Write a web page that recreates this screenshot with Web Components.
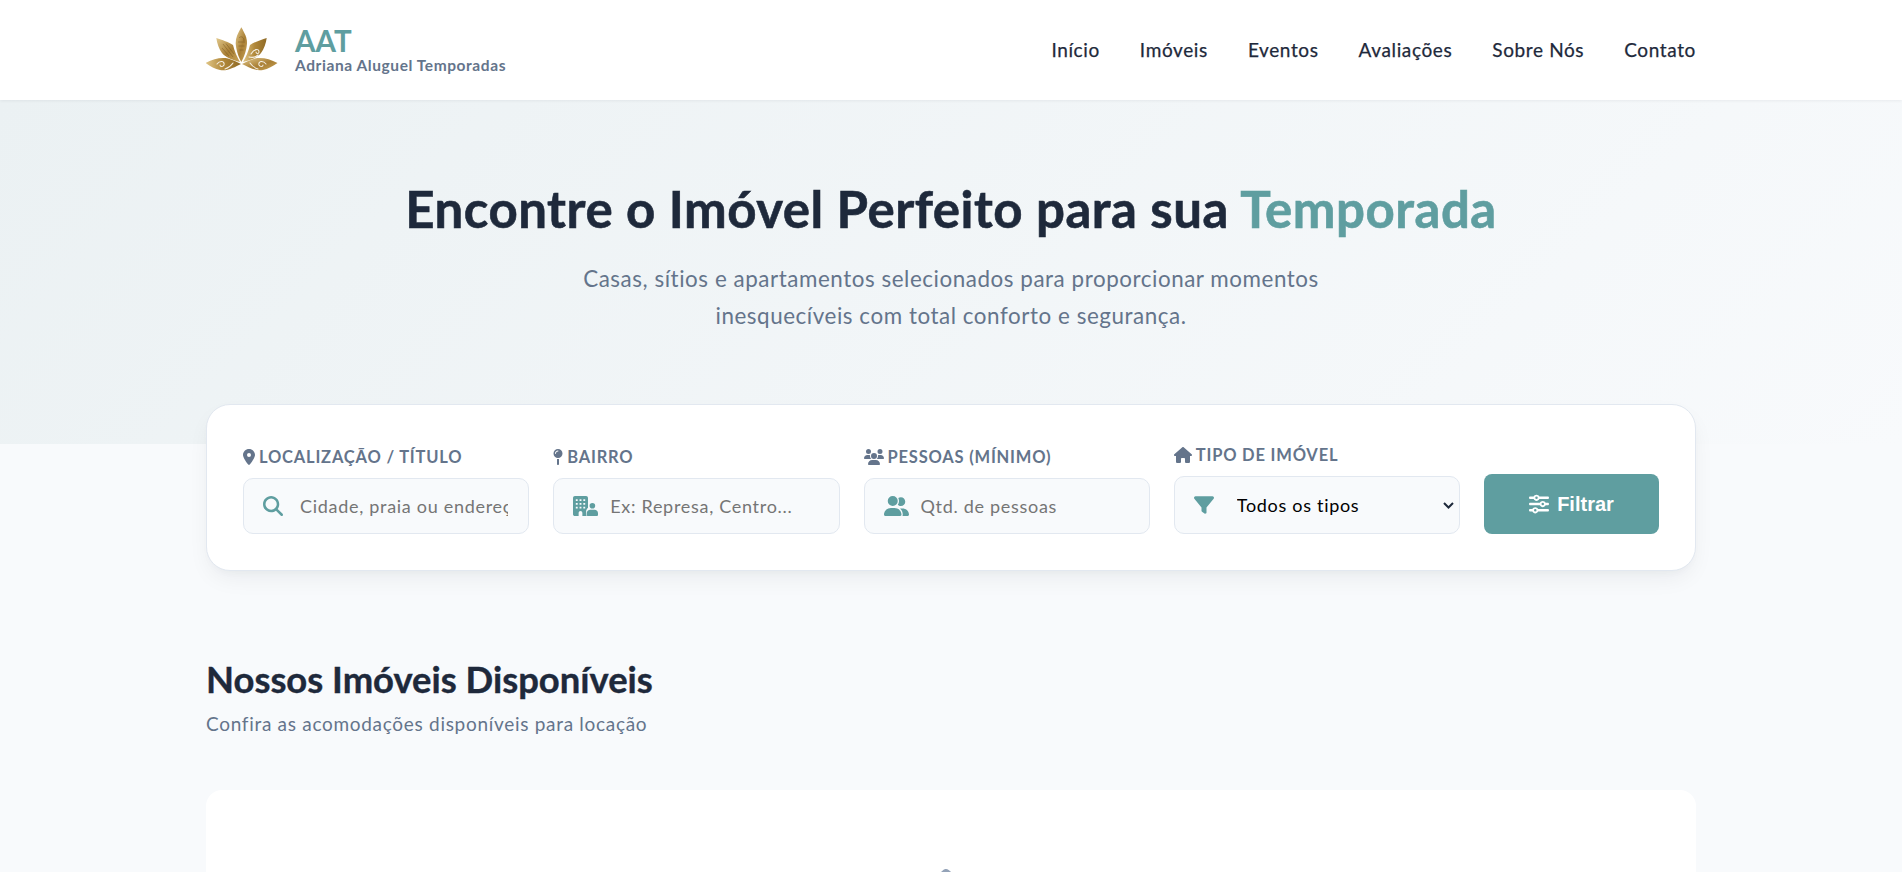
<!DOCTYPE html>
<html lang="pt-BR">
<head>
<meta charset="utf-8">
<title>AAT - Adriana Aluguel Temporadas</title>
<style>
  html, body { margin: 0; height: 872px; overflow: hidden; background: #f8fafc; }
  body { font-family: "Lato", "Noto Sans", sans-serif; color: #1e293b; }
  .page-main { display: block; width: 1490px; margin: 0 auto; }
</style>
</head>
<body>
<site-header></site-header>
<hero-section>
  Encontre o Imóvel Perfeito para sua <em slot="accent">Temporada</em>
  <span slot="sub">Casas, sítios e apartamentos selecionados para proporcionar momentos<br>inesquecíveis com total conforto e segurança.</span>
</hero-section>
<div class="page-main">
  <search-panel></search-panel>
  <section-heading title="Nossos Imóveis Disponíveis" sub="Confira as acomodações disponíveis para locação"></section-heading>
  <empty-state></empty-state>
</div>

<script>
const ICONS = {
  pin: ["0 0 384 512", "M215.7 499.2C267 435 384 279.4 384 192C384 86 298 0 192 0S0 86 0 192c0 87.4 117 243 168.3 307.2c12.3 15.3 35.1 15.3 47.4 0zM192 128a64 64 0 1 1 0 128 64 64 0 1 1 0-128z"],
  mapPin: ["0 0 320 512", "M16 144a144 144 0 1 1 288 0A144 144 0 1 1 16 144zM160 80c8.8 0 16-7.2 16-16s-7.2-16-16-16c-53 0-96 43-96 96c0 8.8 7.2 16 16 16s16-7.2 16-16c0-35.3 28.7-64 64-64zM128 480V317.1c10.4 1.9 21.1 2.9 32 2.9s21.6-1 32-2.9V480c0 17.7-14.3 32-32 32s-32-14.3-32-32z"],
  users: ["0 0 640 512", "M144 0a80 80 0 1 1 0 160A80 80 0 1 1 144 0zM512 0a80 80 0 1 1 0 160A80 80 0 1 1 512 0zM0 298.7C0 239.8 47.8 192 106.7 192h42.7c15.9 0 31 3.5 44.6 9.7c-1.3 7.2-1.9 14.7-1.9 22.3c0 38.2 16.8 72.5 43.3 96c-.2 0-.4 0-.7 0H21.3C9.6 320 0 310.4 0 298.7zM405.3 320c-.2 0-.4 0-.7 0c26.6-23.5 43.3-57.8 43.3-96c0-7.6-.7-15-1.9-22.3c13.6-6.3 28.7-9.7 44.6-9.7h42.7C592.2 192 640 239.8 640 298.7c0 11.8-9.6 21.3-21.3 21.3H405.3zM224 224a96 96 0 1 1 192 0 96 96 0 1 1 -192 0zM128 485.3C128 411.7 187.7 352 261.3 352H378.7C452.3 352 512 411.7 512 485.3c0 14.7-11.9 26.7-26.7 26.7H154.7c-14.7 0-26.7-11.9-26.7-26.7z"],
  house: ["0 0 576 512", "M575.8 255.5c0 18-15 32.1-32 32.1h-32l.7 160.2c0 2.7-.2 5.4-.5 8.1V472c0 22.1-17.9 40-40 40H456c-1.1 0-2.2 0-3.3-.1c-1.4 .1-2.8 .1-4.2 .1H416 392c-22.1 0-40-17.9-40-40V448 384c0-17.7-14.3-32-32-32H256c-17.7 0-32 14.3-32 32v64 24c0 22.1-17.9 40-40 40H160 128.1c-1.5 0-3-.1-4.5-.2c-1.2 .1-2.4 .2-3.6 .2H104c-22.1 0-40-17.9-40-40V360c0-.9 0-1.9 .1-2.8V287.6H32c-18 0-32-14-32-32.1c0-9 3-17 10-24L266.4 8c7-7 15-8 22-8s15 2 21 7L564.8 231.5c8 7 12 15 11 24z"],
  search: ["0 0 512 512", "M416 208c0 45.9-14.9 88.3-40 122.7L502.6 457.4c12.5 12.5 12.5 32.8 0 45.3s-32.8 12.5-45.3 0L330.7 376c-34.4 25.2-76.8 40-122.7 40C93.1 416 0 322.9 0 208S93.1 0 208 0S416 93.1 416 208zM208 352a144 144 0 1 0 0-288 144 144 0 1 0 0 288z"],
  buildingUser: ["0 0 640 512", "M48 0H336c26.5 0 48 21.5 48 48V300c-30 24-48 60-48 100v64c0 18 6 34 16 48H240V432c0-26.5-21.5-48-48-48s-48 21.5-48 48v80H48c-26.5 0-48-21.5-48-48V48C0 21.500 21.500 0 48 0zM72 80v48h48V80H72zM168 80v48h48V80H168zM264 80v48h48V80H264zM72 176v48h48V176H72zM168 176v48h48V176H168zM264 176v48h48V176H264zM72 272v48h48V272H72zM168 272v48h48V272H168zM264 272v48h48V272H264zM496 176a72 72 0 1 1 0 144 72 72 0 1 1 0-144zM440 352H552c48 0 88 40 88 88v40c0 18-14 32-32 32H384c-18 0-32-14-32-32v-40c0-48 40-88 88-88z"],
  userGroup: ["0 0 640 512", "M96 128a128 128 0 1 1 256 0A128 128 0 1 1 96 128zM0 482.300C0 383.800 79.800 304 178.300 304h91.400C368.200 304 448 383.800 448 482.300c0 16.400-13.300 29.700-29.700 29.700H29.700C13.300 512 0 498.700 0 482.300zM609.300 512H471.400c5.400-9.400 8.600-20.300 8.600-32v-8c0-60.700-27.100-115.200-69.800-151.800c2.400-.1 4.700-.2 7.100-.2h61.400C567.800 320 640 392.200 640 481.300c0 17-13.800 30.700-30.700 30.700zM432 256c-31 0-59-12.600-79.300-32.900C372.400 196.500 384 163.600 384 128c0-26.800-6.600-52.100-18.300-74.300C384.300 40.100 407.200 32 432 32c61.900 0 112 50.100 112 112s-50.100 112-112 112z"],
  filter: ["0 0 512 512", "M3.900 54.900C10.500 40.900 24.500 32 40 32H472c15.500 0 29.500 8.900 36.100 22.900s4.600 30.500-5.200 42.500L320 320.900V448c0 12.100-6.800 23.200-17.700 28.600s-23.800 4.300-33.500-3l-64-48c-8.100-6-12.800-15.500-12.800-25.600V320.900L9 97.300C-.7 85.400-2.800 68.800 3.900 54.900z"],
  sliders: ["0 0 512 512", "M0 416c0 17.700 14.300 32 32 32l54.700 0c12.300 28.300 40.500 48 73.300 48s61-19.700 73.300-48L480 448c17.700 0 32-14.300 32-32s-14.300-32-32-32l-246.700 0c-12.300-28.300-40.500-48-73.300-48s-61 19.700-73.300 48L32 384c-17.700 0-32 14.300-32 32zm128 0a32 32 0 1 1 64 0 32 32 0 1 1 -64 0zM320 256a32 32 0 1 1 64 0 32 32 0 1 1 -64 0zm32-80c-32.800 0-61 19.700-73.300 48L32 224c-17.700 0-32 14.300-32 32s14.300 32 32 32l246.700 0c12.300 28.300 40.500 48 73.300 48s61-19.700 73.300-48l54.700 0c17.700 0 32-14.300 32-32s-14.300-32-32-32l-54.700 0c-12.300-28.300-40.500-48-73.300-48zM192 128a32 32 0 1 1 0-64 32 32 0 1 1 0 64zm73.300-64C253 35.700 224.800 16 192 16s-61 19.700-73.300 48L32 64C14.300 64 0 78.300 0 96s14.300 32 32 32l86.700 0c12.300 28.300 40.500 48 73.300 48s61-19.700 73.300-48L480 128c17.700 0 32-14.300 32-32s-14.300-32-32-32L265.300 64z"]
};

function icon(name, h) {
  const [box, d] = ICONS[name];
  const [, , w, ht] = box.split(" ").map(Number);
  return `<svg viewBox="${box}" width="${(h * w / ht).toFixed(2)}" height="${h}" fill="currentColor" aria-hidden="true"><path fill-rule="evenodd" d="${d}"/></svg>`;
}

class LotusLogo extends HTMLElement {
  constructor() {
    super();
    this.attachShadow({ mode: "open" });
    this.shadowRoot.innerHTML = `
      <style>:host { display: block; width: 72px; height: 46px; } svg { display: block; }</style>
      <svg viewBox="0 0 72 46" width="72" height="46">
        <defs>
          <linearGradient id="g" x1="0" y1="0" x2="1" y2="1">
            <stop offset="0" stop-color="#e2c98c"/><stop offset=".55" stop-color="#a97f35"/><stop offset="1" stop-color="#c9a458"/>
          </linearGradient>
          <linearGradient id="h" x1="0" y1="0" x2="1" y2="0">
            <stop offset="0" stop-color="#e0c687"/><stop offset=".5" stop-color="#b08739"/><stop offset="1" stop-color="#8f6a26"/>
          </linearGradient>
        </defs>
        <path fill="url(#g)" d="M35.300 .3 C32 6 29.500 11 29.700 16 C30 23 32.500 30 35.300 35 C38 30 40.700 23 41 16 C41.200 11 38.500 6 35.300 .3Z"/>
        <path fill="url(#g)" d="M10.300 11 C16 13 23 15 27 18 C28.500 24 31 30 34 35 C26 33 19 30 16 26 C13 22 11 16 10.300 11Z"/>
        <path fill="url(#h)" d="M60.700 11 C55 13 48 15 44 18 C42.500 24 40 30 37 35 C45 33 52 30 55 26 C58 22 60 16 60.700 11Z"/>
        <path fill="url(#h)" d="M-.3 36 C7 32 15 30 22 31.500 C27 33 31 35 35 37 C29 40 21 44.500 14 43 C9 42 4 39 -.3 36Z"/>
        <path fill="url(#g)" d="M71.500 36 C64 32 56 30 49 31.500 C44 33 40 35 36 37 C42 40 50 44.500 57 43 C62 42 67 39 71.500 36Z"/>
        <g fill="none" stroke="#fff" stroke-opacity=".85" stroke-width="1.100" stroke-linecap="round">
          <path d="M11 37 C14 33 19 34 18 38 C17 40 14 40 14 38 M19 42 C22 41 25 39 27 36"/>
          <path d="M60 37 C57 33 52 34 53 38 C54 40 57 40 57 38 M52 42 C49 41 46 39 44 36"/>
          <path d="M45 27 C48 22 53 21 53 25 C53 27 50 27 50 25 M43 30 C47 31 50 30 52 28"/>
        </g>
        <g fill="none" stroke="#6e4f1c" stroke-opacity=".55" stroke-width=".8">
          <path d="M33 11 C35 8.500 38 10 38 14 M32 15 H39 M32.500 19 H38.500 M33.500 23 H37.500"/>
          <path d="M17 17 L27 30 M20 16.500 L28 27 M16 21 L23 29"/>
        </g>
      </svg>`;
  }
}

class SiteHeader extends HTMLElement {
  constructor() {
    super();
    this.attachShadow({ mode: "open" });
    const links = ["Início", "Imóveis", "Eventos", "Avaliações", "Sobre Nós", "Contato"];
    this.shadowRoot.innerHTML = `
      <style>
        :host { display: block; position: relative; z-index: 2; background: #fff; box-shadow: 0 1px 3px rgba(15, 23, 42, .06); }
        .bar { width: 1490px; height: 100px; margin: 0 auto; display: flex; align-items: center; justify-content: space-between; }
        .brand { display: flex; align-items: center; gap: 17px; }
        .name { font-size: 29.500px; font-weight: 700; color: #5f9ea0; line-height: 30px; }
        .tag { font-size: 15.500px; font-weight: 700; letter-spacing: .58px; color: #64748b; line-height: 18px; }
        nav { display: flex; gap: 40px; margin-top: -2px; }
        a { color: #1e293b; font-size: 19px; letter-spacing: .62px; -webkit-text-stroke: .25px #1e293b; text-decoration: none; }
      </style>
      <div class="bar">
        <div class="brand">
          <lotus-logo></lotus-logo>
          <div><div class="name">AAT</div><div class="tag">Adriana Aluguel Temporadas</div></div>
        </div>
        <nav>${links.map((l) => `<a href="#">${l}</a>`).join("")}</nav>
      </div>`;
  }
}

class HeroSection extends HTMLElement {
  constructor() {
    super();
    this.attachShadow({ mode: "open" });
    this.shadowRoot.innerHTML = `
      <style>
        :host { display: block; height: 344px; box-sizing: border-box; padding-top: 80px; text-align: center; background: linear-gradient(135deg, #ebf1f3 0%, #f8fafc 100%); }
        h1 { margin: 0 0 22px; font-size: 51px; letter-spacing: .5px; line-height: 58px; font-weight: 700; -webkit-text-stroke: .6px; color: #1e293b; }
        ::slotted(em) { font-style: normal; color: #5f9ea0; }
        p { margin: 0; font-size: 22.400px; letter-spacing: .55px; line-height: 37px; color: #64748b; }
      </style>
      <h1><slot></slot><slot name="accent"></slot></h1>
      <p><slot name="sub"></slot></p>`;
  }
}

class SearchField extends HTMLElement {
  constructor() {
    super();
    this.attachShadow({ mode: "open" });
    const name = this.getAttribute("icon");
    const control = this.getAttribute("control");
    const select = control === "select";
    this.shadowRoot.innerHTML = `
      <style>
        :host { display: block; }
        label { display: flex; align-items: center; gap: 4px; margin-bottom: 9px; height: 24px; font-size: 16.500px; letter-spacing: .8px; font-weight: 700; color: #64748b; text-transform: uppercase; white-space: nowrap; }
        .box { position: relative; }
        .lead { position: absolute; left: 20px; top: 0; bottom: 0; display: flex; align-items: center; color: #5f9ea0; pointer-events: none; }
        .chevron { position: absolute; right: 6px; top: 26px; pointer-events: none; }
        input, select { display: block; width: 100%; height: ${select ? 58 : 56}px; box-sizing: border-box; border: 1px solid #e2e8f0; border-radius: 10px; background: #f8fafc; font: 400 18px "Lato", "Noto Sans", sans-serif; letter-spacing: .7px; color: #1e293b; outline: none; }
        input { padding: 0 20px 0 56px; }
        input::placeholder { color: #757575; opacity: 1; }
        select { appearance: none; padding: 0 24px 0 62px; color: #000; }
      </style>
      <label>${icon(name, 16)}${this.getAttribute("label")}</label>
      <div class="box">
        <span class="lead">${icon(this.getAttribute("lead"), 20)}</span>
        ${select
          ? `<select><option>Todos os tipos</option></select>
             <svg class="chevron" width="11" height="7" viewBox="0 0 11 7" aria-hidden="true"><path d="M1 1l4.500 4.500L10 1" fill="none" stroke="#1e293b" stroke-width="2"/></svg>`
          : `<input type="text" placeholder="${this.getAttribute("placeholder")}">`}
      </div>`;
  }
}

class SearchPanel extends HTMLElement {
  constructor() {
    super();
    this.attachShadow({ mode: "open" });
    this.shadowRoot.innerHTML = `
      <style>
        :host { display: grid; grid-template-columns: repeat(4, 1fr) 175px; gap: 24px; align-items: end; box-sizing: border-box; position: relative; height: 167px; margin-top: -40px; padding: 36px; background: #fff; border: 1px solid #e2e8f0; border-radius: 24px; box-shadow: 0 10px 25px -5px rgba(15, 23, 42, .07), 0 4px 10px -4px rgba(15, 23, 42, .04); }
        button { display: flex; align-items: center; justify-content: center; gap: 8px; height: 60px; border: 0; border-radius: 8px; background: #5f9ea0; color: #fff; font: 700 20px "Liberation Sans", Arial, sans-serif; }
      </style>
      <search-field icon="pin" lead="search" label="Localização / Título" placeholder="Cidade, praia ou endereço"></search-field>
      <search-field icon="mapPin" lead="buildingUser" label="Bairro" placeholder="Ex: Represa, Centro..."></search-field>
      <search-field icon="users" lead="userGroup" label="Pessoas (mínimo)" placeholder="Qtd. de pessoas"></search-field>
      <search-field icon="house" lead="filter" label="Tipo de Imóvel" control="select"></search-field>
      <button type="button">${icon("sliders", 20)}Filtrar</button>`;
  }
}

class SectionHeading extends HTMLElement {
  constructor() {
    super();
    this.attachShadow({ mode: "open" });
    this.shadowRoot.innerHTML = `
      <style>
        :host { display: block; margin-top: 87px; }
        h2 { margin: 0; font-size: 36.400px; line-height: 42px; font-weight: 700; -webkit-text-stroke: .4px; color: #1e293b; }
        p { margin: 11px 0 0; font-size: 19px; letter-spacing: .7px; line-height: 26px; color: #64748b; }
      </style>
      <h2>${this.getAttribute("title")}</h2>
      <p>${this.getAttribute("sub")}</p>`;
  }
}

class EmptyState extends HTMLElement {
  constructor() {
    super();
    this.attachShadow({ mode: "open" });
    this.shadowRoot.innerHTML = `
      <style>
        :host { display: block; margin-top: 53px; height: 400px; box-sizing: border-box; padding-top: 79px; background: #fff; border-radius: 16px; text-align: center; color: #94a3b8; }
        svg { display: block; margin: 0 auto; transform: translateX(-5px); }
      </style>
      ${icon("house", 64)}`;
  }
}

customElements.define("lotus-logo", LotusLogo);
customElements.define("site-header", SiteHeader);
customElements.define("hero-section", HeroSection);
customElements.define("search-field", SearchField);
customElements.define("search-panel", SearchPanel);
customElements.define("section-heading", SectionHeading);
customElements.define("empty-state", EmptyState);
</script>
</body>
</html>
